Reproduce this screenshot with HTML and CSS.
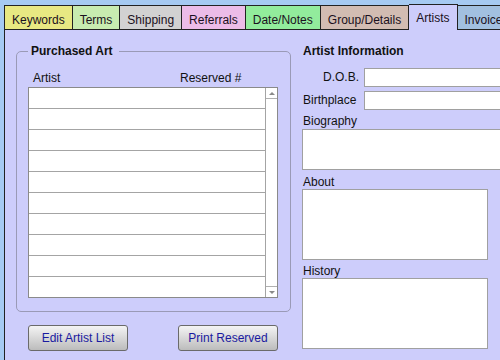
FILE: index.html
```html
<!DOCTYPE html>
<html>
<head>
<meta charset="utf-8">
<link rel="stylesheet" href="styles.css">
</head>
<body>
<div class="app">
  <div class="tabs">
    <div class="tab t-keywords">Keywords</div>
    <div class="tab t-terms">Terms</div>
    <div class="tab t-shipping">Shipping</div>
    <div class="tab t-referrals">Referrals</div>
    <div class="tab t-date">Date/Notes</div>
    <div class="tab t-group">Group/Details</div>
    <div class="tab active">Artists</div>
    <div class="tab t-invoice">Invoice</div>
  </div>
  <div class="panel">
    <div class="left">
      <fieldset class="group">
        <legend>Purchased Art</legend>
        <div class="cols">
          <span class="col-artist">Artist</span>
          <span class="col-res">Reserved #</span>
        </div>
        <div class="list">
          <div class="rows">
            <div class="row"></div><div class="row"></div><div class="row"></div><div class="row"></div><div class="row"></div>
            <div class="row"></div><div class="row"></div><div class="row"></div><div class="row"></div><div class="row"></div>
          </div>
          <div class="scroll">
            <div class="sb-btn up"><span class="tri-up"></span></div>
            <div class="sb-track"></div>
            <div class="sb-btn down"><span class="tri-down"></span></div>
          </div>
        </div>
      </fieldset>
      <div class="buttons">
        <button class="btn">Edit Artist List</button>
        <button class="btn">Print Reserved</button>
      </div>
    </div>
    <div class="right">
      <div class="title">Artist Information</div>
      <div class="field">
        <label class="lbl lbl-right">D.O.B.</label>
        <div class="input"></div>
      </div>
      <div class="field second">
        <label class="lbl">Birthplace</label>
        <div class="input"></div>
      </div>
      <div class="area-label bio-label">Biography</div>
      <div class="area bio"></div>
      <div class="area-label about-label">About</div>
      <div class="area tall"></div>
      <div class="area-label hist-label">History</div>
      <div class="area tall"></div>
    </div>
  </div>
</div>
</body>
</html>
```

FILE: styles.css
```css
html, body {
  margin: 0;
  padding: 0;
}
body {
  width: 500px;
  height: 360px;
  overflow: hidden;
  background: #a6caf2;
  font-family: "Liberation Sans", Arial, sans-serif;
  font-size: 12px;
  color: #111;
}
.app {
  padding: 4px 0 0 4px;
  width: 700px;
}
.tabs {
  display: flex;
  align-items: flex-end;
  height: 26px;
}
.tab {
  box-sizing: border-box;
  flex-shrink: 0;
  height: 25px;
  border: 1px solid #222;
  border-left: none;
  padding: 7px 7px 0 7px;
  line-height: 14px;
  white-space: nowrap;
  color: #1a1020;
}
.tab:first-child { border-left: 1px solid #222; }
.t-keywords { background: #e8e882; }
.t-terms { background: #c8ecb0; }
.t-shipping { background: #d2d2d2; }
.t-referrals { background: #ecbce8; }
.t-date { background: #92ec9c; }
.t-group { background: #d2bcb2; }
.t-invoice { background: #a2c0e0; }
.tab.active {
  height: 26px;
  border-bottom: none;
  padding-top: 6px;
  background: #cdcdfb;
}
.panel {
  display: flex;
  background: #cdcdfb;
  border-left: 1px solid #222;
  padding: 14px 0 0 11px;
  height: 330px;
  box-sizing: border-box;
}
.left {
  width: 275px;
  flex-shrink: 0;
}
.group {
  margin: 0;
  width: 275px;
  box-sizing: border-box;
  border: 1px solid #9a9ab6;
  border-radius: 5px;
  padding: 0 12px 13px 11px;
}
.group legend {
  font-weight: bold;
  line-height: 14px;
  padding: 0 6px 0 3px;
  color: #111;
}
.cols {
  display: flex;
  line-height: 14px;
  margin-top: 13px;
  margin-bottom: 2px;
  padding-left: 5px;
}
.col-artist { width: 147px; }
.list {
  display: flex;
  width: 250px;
  height: 211px;
  box-sizing: border-box;
  border: 1px solid #8a8a8a;
  background: #fff;
}
.rows { flex: 1; }
.row {
  height: 20px;
  border-bottom: 1px solid #a4a4a4;
}
.row:last-child { border-bottom: none; }
.scroll {
  width: 11px;
  border-left: 1px solid #a4a4a4;
  display: flex;
  flex-direction: column;
}
.sb-btn {
  height: 10px;
  display: flex;
  align-items: center;
  justify-content: center;
}
.sb-btn.up { border-bottom: 1px solid #b0b0b0; }
.sb-btn.down { border-top: 1px solid #b0b0b0; }
.sb-track { flex: 1; }
.tri-up {
  width: 0; height: 0;
  border-left: 3px solid transparent;
  border-right: 3px solid transparent;
  border-bottom: 3px solid #8a8a8a;
}
.tri-down {
  width: 0; height: 0;
  border-left: 3px solid transparent;
  border-right: 3px solid transparent;
  border-top: 3px solid #8a8a8a;
}
.buttons {
  display: flex;
  gap: 50px;
  padding-left: 12px;
  margin-top: 13px;
}
.btn {
  width: 100px;
  height: 26px;
  box-sizing: border-box;
  border: 1px solid #6a6a6a;
  border-radius: 3px;
  background: linear-gradient(#f4f4f4, #bcbcbc);
  font-family: "Liberation Sans", Arial, sans-serif;
  font-size: 12px;
  color: #1a1aa0;
  padding: 0;
  line-height: 14px;
}
.right {
  margin-left: 11px;
  flex-shrink: 0;
  width: 260px;
}
.title {
  font-weight: bold;
  line-height: 14px;
  padding-left: 1px;
}
.field {
  display: flex;
  margin-top: 10px;
  height: 19px;
}
.field.second { margin-top: 4px; }
.lbl {
  width: 58px;
  box-sizing: border-box;
  padding: 0 1px;
  line-height: 19px;
  margin-right: 4px;
  flex-shrink: 0;
}
.lbl-right { text-align: right; }
.input {
  width: 180px;
  height: 19px;
  box-sizing: border-box;
  border: 1px solid #a0a0a0;
  background: #fff;
  flex-shrink: 0;
}
.area-label {
  line-height: 14px;
  padding-left: 1px;
}
.bio-label { margin-top: 4px; margin-bottom: 1px; }
.about-label { margin-top: 5px; }
.hist-label { margin-top: 4px; }
.area {
  box-sizing: border-box;
  border: 1px solid #a0a0a0;
  background: #fff;
}
.area.bio {
  width: 240px;
  height: 41px;
}
.area.tall {
  width: 186px;
  height: 71px;
}
```
